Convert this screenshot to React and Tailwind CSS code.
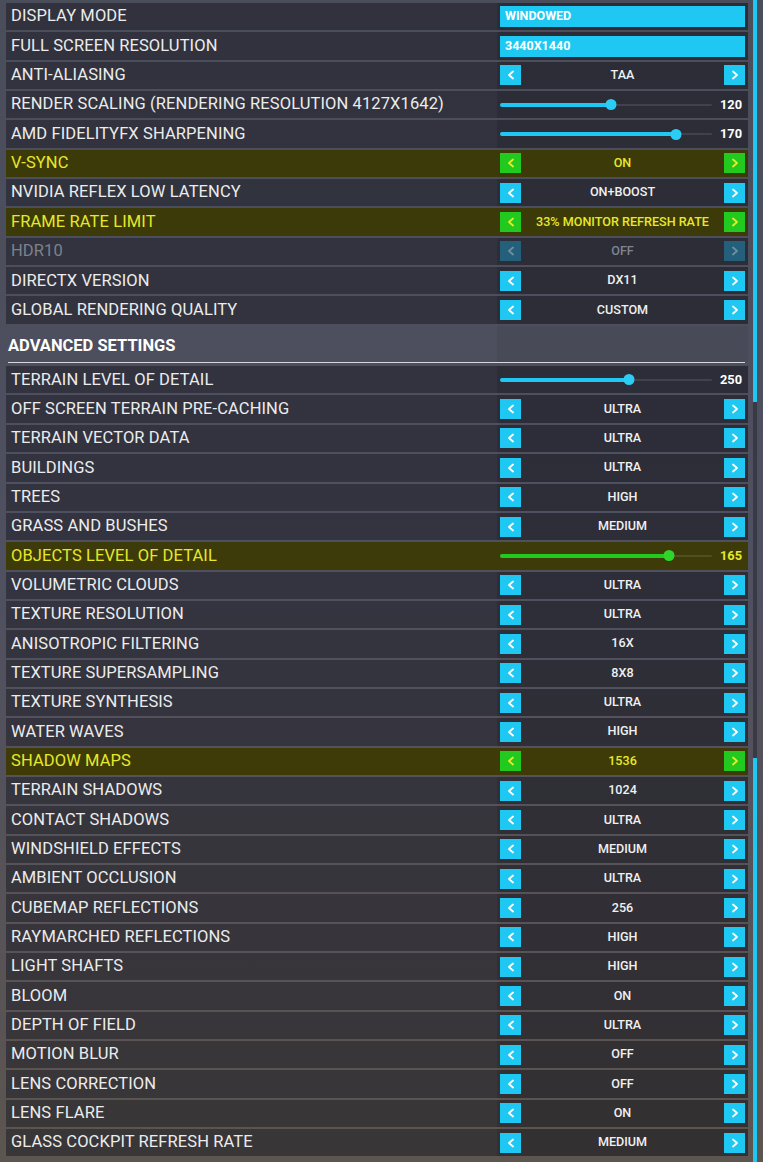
import React from "react";

const general = [
  { label: "DISPLAY MODE", type: "drop", value: "WINDOWED" },
  { label: "FULL SCREEN RESOLUTION", type: "drop", value: "3440X1440" },
  { label: "ANTI-ALIASING", type: "pick", value: "TAA" },
  { label: "RENDER SCALING (RENDERING RESOLUTION 4127X1642)", type: "slide", value: "120", pos: 0.524 },
  { label: "AMD FIDELITYFX SHARPENING", type: "slide", value: "170", pos: 0.83 },
  { label: "V-SYNC", type: "pick", value: "ON", hot: true },
  { label: "NVIDIA REFLEX LOW LATENCY", type: "pick", value: "ON+BOOST" },
  { label: "FRAME RATE LIMIT", type: "pick", value: "33% MONITOR REFRESH RATE", hot: true },
  { label: "HDR10", type: "pick", value: "OFF", off: true },
  { label: "DIRECTX VERSION", type: "pick", value: "DX11" },
  { label: "GLOBAL RENDERING QUALITY", type: "pick", value: "CUSTOM" },
];

const advanced = [
  { label: "TERRAIN LEVEL OF DETAIL", type: "slide", value: "250", pos: 0.608 },
  { label: "OFF SCREEN TERRAIN PRE-CACHING", type: "pick", value: "ULTRA" },
  { label: "TERRAIN VECTOR DATA", type: "pick", value: "ULTRA" },
  { label: "BUILDINGS", type: "pick", value: "ULTRA" },
  { label: "TREES", type: "pick", value: "HIGH" },
  { label: "GRASS AND BUSHES", type: "pick", value: "MEDIUM" },
  { label: "OBJECTS LEVEL OF DETAIL", type: "slide", value: "165", pos: 0.797, hot: true },
  { label: "VOLUMETRIC CLOUDS", type: "pick", value: "ULTRA" },
  { label: "TEXTURE RESOLUTION", type: "pick", value: "ULTRA" },
  { label: "ANISOTROPIC FILTERING", type: "pick", value: "16X" },
  { label: "TEXTURE SUPERSAMPLING", type: "pick", value: "8X8" },
  { label: "TEXTURE SYNTHESIS", type: "pick", value: "ULTRA" },
  { label: "WATER WAVES", type: "pick", value: "HIGH" },
  { label: "SHADOW MAPS", type: "pick", value: "1536", hot: true },
  { label: "TERRAIN SHADOWS", type: "pick", value: "1024" },
  { label: "CONTACT SHADOWS", type: "pick", value: "ULTRA" },
  { label: "WINDSHIELD EFFECTS", type: "pick", value: "MEDIUM" },
  { label: "AMBIENT OCCLUSION", type: "pick", value: "ULTRA" },
  { label: "CUBEMAP REFLECTIONS", type: "pick", value: "256" },
  { label: "RAYMARCHED REFLECTIONS", type: "pick", value: "HIGH" },
  { label: "LIGHT SHAFTS", type: "pick", value: "HIGH" },
  { label: "BLOOM", type: "pick", value: "ON" },
  { label: "DEPTH OF FIELD", type: "pick", value: "ULTRA" },
  { label: "MOTION BLUR", type: "pick", value: "OFF" },
  { label: "LENS CORRECTION", type: "pick", value: "OFF" },
  { label: "LENS FLARE", type: "pick", value: "ON" },
  { label: "GLASS COCKPIT REFRESH RATE", type: "pick", value: "MEDIUM" },
];

function Chevron({ dir, color }) {
  const pts = dir === "left" ? "6,1.5 2,5 6,8.5" : "2,1.5 6,5 2,8.5";
  return (
    <svg width="8" height="10" viewBox="0 0 8 10">
      <polyline points={pts} fill="none" stroke={color} strokeWidth="1.8" strokeLinecap="round" strokeLinejoin="round" />
    </svg>
  );
}

function ArrowButton({ dir, hot, off }) {
  const cls = hot ? "bg-[#22c91e]" : off ? "bg-[#245f7c]" : "bg-[#1ec8f2]";
  const stroke = hot ? "#e8ea2a" : off ? "#6f8ea0" : "#ffffff";
  return (
    <div className={`w-[21px] h-[20px] flex items-center justify-center shrink-0 ${cls}`}>
      <Chevron dir={dir} color={stroke} />
    </div>
  );
}

function Picker({ item }) {
  const text = item.hot ? "text-[#e6e82a]" : item.off ? "text-[#7f8590]" : "text-[#f0f0f0]";
  return (
    <div className="flex items-center w-full">
      <ArrowButton dir="left" hot={item.hot} off={item.off} />
      <div className={`flex-1 text-center text-[12.6px] font-medium ${text}`}>{item.value}</div>
      <ArrowButton dir="right" hot={item.hot} off={item.off} />
    </div>
  );
}

function Dropdown({ item }) {
  return (
    <div className="w-full h-[21px] bg-[#1ec8f2] flex items-center pl-[5px] text-[12.5px] font-bold text-white">
      {item.value}
    </div>
  );
}

function Slider({ item }) {
  const fill = item.hot ? "bg-[#22c91e]" : "bg-[#1ec8f2]";
  const thumb = item.hot ? "bg-[#2fd62a]" : "bg-[#2ccdf5]";
  const pct = `${item.pos * 100}%`;
  return (
    <div className="flex items-center w-full">
      <div className="relative w-[212px] h-[12px] flex items-center">
        <div className="absolute left-0 right-0 h-[2px] bg-white/10 rounded-full" />
        <div className={`absolute left-0 h-[4px] rounded-full ${fill}`} style={{ width: pct }} />
        <div
          className={`absolute w-[11px] h-[11px] rounded-full -translate-x-1/2 ${thumb}`}
          style={{ left: pct }}
        />
      </div>
      <div className={`flex-1 text-right pr-[3px] text-[12.8px] font-bold ${item.hot ? "text-[#e6e82a]" : "text-white"}`}>
        {item.value}
      </div>
    </div>
  );
}

function Row({ item }) {
  const bg = item.hot ? "bg-[#3c3900]/90" : "bg-[#18181f]/50";
  const label = item.hot ? "text-[#e6e82a]" : item.off ? "text-[#7d828d]" : "text-[#ececec]";
  return (
    <div className={`flex items-center h-[27.35px] ${bg}`}>
      <div className={`flex-1 pl-[5px] text-[16.5px] tracking-[0.1px] leading-none whitespace-nowrap ${label}`}>{item.label}</div>
      <div className={`w-[251px] h-full flex items-center pl-[3px] pr-[3px] ${item.hot ? "" : "bg-black/10"}`}>
        {item.type === "drop" && <Dropdown item={item} />}
        {item.type === "pick" && <Picker item={item} />}
        {item.type === "slide" && <Slider item={item} />}
      </div>
    </div>
  );
}

export default function App() {
  return (
    <div
      className="w-[763px] h-[1162px] overflow-hidden flex bg-gradient-to-b from-[#4a4d5a] via-[#4f5060] to-[#5c5550]"
      style={{ fontFamily: "Roboto, 'Liberation Sans', sans-serif" }}
    >
      <div className="w-[742px] ml-[6px] pt-[3px] flex flex-col gap-[2px]">
        {general.map((it) => (
          <Row key={it.label} item={it} />
        ))}
        <div className="h-[38.35px] flex flex-col">
          <div className="flex">
            <div className="flex-1 pt-[10px] pl-[2px] text-[16.5px] leading-[19px] font-bold text-white">ADVANCED SETTINGS</div>
            <div className="w-[251px] h-[36px] bg-black/5" />
          </div>
          <div className="h-px bg-[#d8d8dc] ml-[2px] mr-[3px]" />
        </div>
        {advanced.map((it) => (
          <Row key={it.label} item={it} />
        ))}
      </div>
      <div className="w-[15px] flex flex-col pl-[5px]">
        <div className="w-[4px] h-[402px] bg-[#1ec8f2]" />
        <div className="w-[4px] h-[356px] bg-[#2a2c36]/60" />
        <div className="w-[4px] flex-1 bg-[#1ec8f2]" />
      </div>
    </div>
  );
}
